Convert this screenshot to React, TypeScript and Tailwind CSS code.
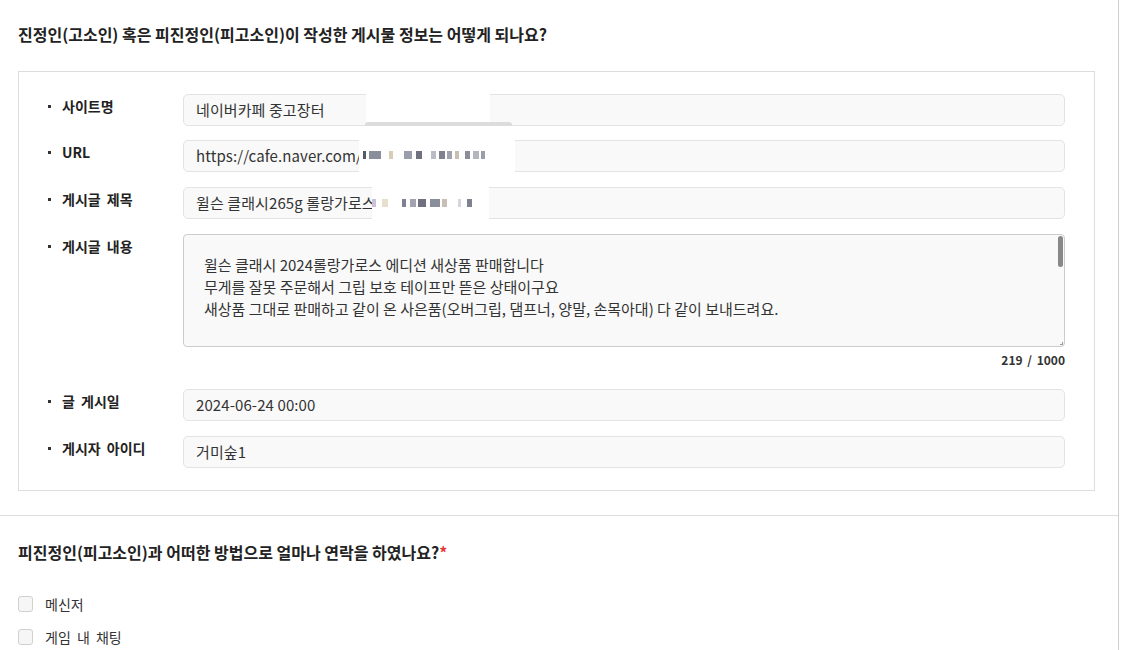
import React from "react";

const FONT = "font-['Noto_Sans_CJK_KR','Noto_Sans',sans-serif]";

type Mosaic = { left: number; width: number; top: number; height: number; blocks: [number, number, string][] };

function MosaicPatch({ m }: { m: Mosaic }) {
  return (
    <div
      className="absolute bg-white"
      style={{ left: m.left, width: m.width, top: m.top, height: m.height }}
    >
      {m.blocks.map(([x, w, c], i) => (
        <div
          key={i}
          className="absolute top-1/2 -translate-y-1/2 h-[8px]"
          style={{ left: x, width: w, background: c }}
        />
      ))}
    </div>
  );
}

function Field({
  label,
  value,
  mosaic,
  bar,
}: {
  label: string;
  value: string;
  mosaic?: Mosaic;
  bar?: boolean;
}) {
  return (
    <div className="flex">
      <Label text={label} />
      <div className="relative flex-1">
        <div className="h-[32px] rounded-[5px] border border-[#e3e3e3] bg-[#f9f9f9] pl-[12px] flex items-center text-[15px] text-[#333] tracking-[0.1px]">
          {value}
        </div>
        {mosaic && <MosaicPatch m={mosaic} />}
        {bar && (
          <>
            <div className="absolute left-[183px] top-[-1px] h-[29px] w-[124px] bg-white" />
            <div className="absolute left-[182px] top-[28px] h-[4px] w-[147px] rounded-t-[3px] bg-[#dcdcdc]" />
          </>
        )}
      </div>
    </div>
  );
}

function Label({ text }: { text: string }) {
  return (
    <div className="w-[164px] pl-[29px] pt-[2px] flex items-start shrink-0">
      <span className="mt-[9px] mr-[11px] h-[3px] w-[3px] bg-[#333]" />
      <span className="text-[14px] leading-[20px] font-bold text-[#222] [word-spacing:3px]">{text}</span>
    </div>
  );
}

const urlMosaic: Mosaic = {
  left: 176,
  width: 156,
  top: -2,
  height: 34,
  blocks: [
    [4, 3, "#555a66"],
    [10, 12, "#8a8e9a"],
    [30, 4, "#d9cbb4"],
    [45, 8, "#9a9eaa"],
    [57, 6, "#6e7280"],
    [72, 5, "#b8bcc4"],
    [80, 6, "#7d8190"],
    [88, 5, "#a1a4ae"],
    [96, 4, "#c9bfb0"],
    [106, 5, "#8a8e9a"],
    [114, 6, "#b4b6bd"],
    [122, 4, "#9a9eaa"],
  ],
};

const titleMosaic: Mosaic = {
  left: 189,
  width: 117,
  top: -1,
  height: 33,
  blocks: [
    [0, 4, "#c9c2d9"],
    [10, 6, "#e9dfcf"],
    [30, 4, "#7d8190"],
    [38, 6, "#a1a4ae"],
    [46, 8, "#6e7280"],
    [58, 10, "#8a8e9a"],
    [70, 5, "#c7bfb4"],
    [86, 3, "#d5d5dc"],
    [95, 5, "#7d8190"],
  ],
};

export default function App() {
  return (
    <div className={`${FONT} bg-white min-h-screen`}>
      <div className="w-[1119px] min-h-[650px] border-r border-[#cfcfcf]">
        <section className="pl-[18px] pt-[22px] pb-[24px]">
          <h3 className="h-[24px] leading-[24px] text-[16px] font-bold text-[#222]">
            진정인(고소인) 혹은 피진정인(피고소인)이 작성한 게시물 정보는 어떻게 되나요?
          </h3>
          <div className="mt-[25px] w-[1077px] border border-[#dddddd] pt-[22px] pb-[22px] pr-[29px]">
            <Field label="사이트명" value="네이버카페 중고장터" bar />
            <div className="mt-[14px]">
              <Field label="URL" value="https://cafe.naver.com/" mosaic={urlMosaic} />
            </div>
            <div className="mt-[15px]">
              <Field label="게시글 제목" value="윌슨 클래시265g 롤랑가로스에" mosaic={titleMosaic} />
            </div>
            <div className="mt-[15px] flex">
              <Label text="게시글 내용" />
              <div className="flex-1">
                <div className="relative h-[113px] overflow-hidden rounded-[4px] border border-[#cccccc] bg-[#f9f9f9] pl-[20px] pt-[19px] text-[15px] leading-[22px] text-[#333]">
                  <p>윌슨 클래시 2024롤랑가로스 에디션 새상품 판매합니다</p>
                  <p>무게를 잘못 주문해서 그립 보호 테이프만 뜯은 상태이구요</p>
                  <p>새상품 그대로 판매하고 같이 온 사은품(오버그립, 댐프너, 양말, 손목아대) 다 같이 보내드려요.</p>
                  <div className="absolute right-[1px] top-[1px] h-[31px] w-[5px] rounded-[3px] bg-[#888888]" />
                  <div className="absolute right-[1px] bottom-[1px] h-[3px] w-[3px] border-r border-b border-[#999]" />
                </div>
                <div className="h-[42px] pt-[5px] text-right text-[12px] leading-[16px] font-bold text-[#333] [word-spacing:2px]">
                  219 / 1000
                </div>
              </div>
            </div>
            <Field label="글 게시일" value="2024-06-24 00:00" />
            <div className="mt-[15px]">
              <Field label="게시자 아이디" value="거미숲1" />
            </div>
          </div>
        </section>
        <section className="border-t border-[#dddddd] pl-[18px] pt-[24px]">
          <h3 className="h-[24px] leading-[24px] text-[16px] font-bold text-[#222]">
            피진정인(피고소인)과 어떠한 방법으로 얼마나 연락을 하였나요?
            <span className="text-[#e53935]">*</span>
          </h3>
          <div className="mt-[30px] flex flex-col gap-[13px]">
            {["메신저", "게임 내 채팅"].map((t) => (
              <label key={t} className="flex h-[20px] items-center">
                <span className="h-[16px] w-[15px] rounded-[3px] border border-[#d0d0d0] bg-[#f6f6f6]" />
                <span className="ml-[12px] text-[14px] text-[#333] [word-spacing:3px]">{t}</span>
              </label>
            ))}
          </div>
        </section>
      </div>
    </div>
  );
}
